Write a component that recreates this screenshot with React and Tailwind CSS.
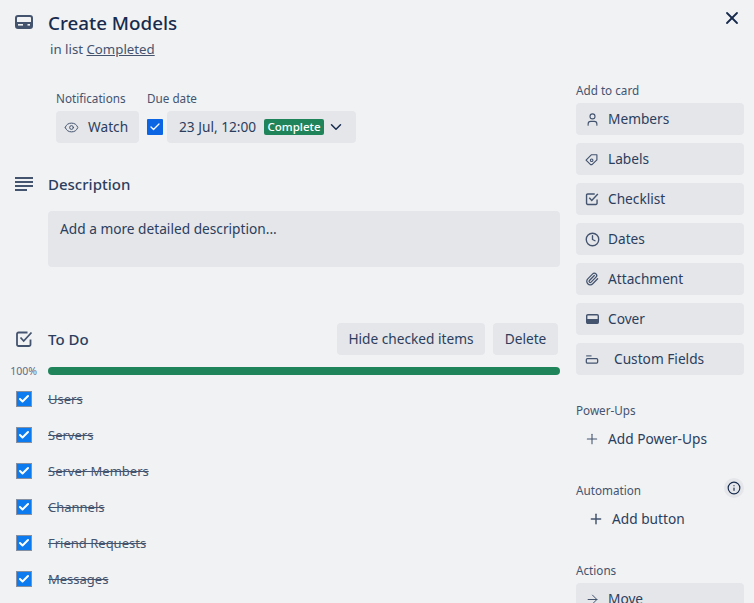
import React from "react";
import { Eye, ChevronDown, User, Clock, Paperclip, Plus, ArrowRight, Info, X, Check } from "lucide-react";

const CardIcon = ({ className }) => (
  <svg className={className} viewBox="0 0 18 14" fill="none">
    <rect x="1" y="1" width="16" height="12" rx="2" stroke="currentColor" strokeWidth="2" />
    <rect x="1" y="7" width="16" height="6" fill="currentColor" />
    <rect x="3" y="9" width="5" height="1.6" fill="#f1f2f4" />
    <rect x="12.5" y="9" width="2.5" height="1.6" fill="#f1f2f4" />
  </svg>
);

const CoverIcon = ({ className }) => (
  <svg className={className} viewBox="0 0 13 10" fill="none">
    <rect x="0.7" y="0.7" width="11.6" height="8.6" rx="1.2" stroke="currentColor" strokeWidth="1.4" />
    <rect x="0.7" y="5" width="11.6" height="4.3" fill="currentColor" />
  </svg>
);

const FieldsIcon = ({ className }) => (
  <svg className={className} viewBox="0 0 14 10" fill="none">
    <path d="M0.5 1h6" stroke="currentColor" strokeWidth="1.2" />
    <rect x="0.7" y="4" width="12.6" height="5" rx="1.2" stroke="currentColor" strokeWidth="1.4" />
  </svg>
);

const LabelIcon = ({ className }) => (
  <svg className={className} viewBox="0 0 16 16" fill="none">
    <path d="M1.2 9.2 7.2 3.2 H13.6 V9 L8 14.4 H6.4 Z" stroke="currentColor" strokeWidth="1.3" strokeLinejoin="round" />
    <circle cx="7.6" cy="9.4" r="1.5" stroke="currentColor" strokeWidth="1.2" />
  </svg>
);

const CheckBoxIcon = ({ className }) => (
  <svg className={className} viewBox="0 0 18 18" fill="none">
    <path d="M15.5 9.5V14.5a1.5 1.5 0 0 1-1.5 1.5H3.5A1.5 1.5 0 0 1 2 14.5V4a1.5 1.5 0 0 1 1.5-1.5H12.5" stroke="currentColor" strokeWidth="1.8" />
    <path d="M5.5 7.5 8.7 11 16.5 2.5" stroke="currentColor" strokeWidth="1.8" />
  </svg>
);

const DescIcon = ({ className }) => (
  <svg className={className} viewBox="0 0 18 14" fill="none">
    <path d="M0 1h18M0 5h18M0 9h18" stroke="currentColor" strokeWidth="2" />
    <path d="M0 13h12" stroke="currentColor" strokeWidth="2" />
  </svg>
);

const btnText = "text-[13.7px] font-normal text-[#2c3e5d]";

const SideButton = ({ icon, label, gap = "gap-2" }) => (
  <button className={`flex h-8 w-full shrink-0 items-center ${gap} rounded bg-[#e4e6ea] pl-2 text-left ${btnText}`}>
    <span className="flex w-4 shrink-0 items-center justify-center text-[#44546f]">{icon}</span>
    <span className="pt-px">{label}</span>
  </button>
);

const SideLabel = ({ children }) => (
  <div className="h-[13px] text-[11.7px] leading-[13px] text-[#44546f]">{children}</div>
);

const items = ["Users", "Servers", "Server Members", "Channels", "Friend Requests", "Messages"];

export default function App() {
  return (
    <div className="relative h-[603px] w-[754px] overflow-hidden bg-[#f1f2f4] font-['Noto_Sans',sans-serif] text-[#172b4d]">
      {/* close */}
      <button className="absolute right-[12px] top-[8px] text-[#172b4d]">
        <X className="h-5 w-5" strokeWidth={2.2} />
      </button>

      {/* header */}
      <div className="flex h-[36px] pl-[15px] pt-[9px]">
        <CardIcon className="mt-[6px] h-[14px] w-[18px] text-[#44546f]" />
        <h2 className="ml-[15px] text-[18.8px] font-medium leading-7 text-[#172b4d]">Create Models</h2>
      </div>
      <div className="mt-[3px] pl-[50px] text-[13.25px] leading-5 text-[#44546f]">
        in list <span className="underline">Completed</span>
      </div>

      <div className="mt-4 flex gap-4 pr-[10px]">
        {/* main column */}
        <div className="w-[560px] shrink-0">
          <div className="mt-[15px] flex gap-2 pl-14">
            <div>
              <div className="mb-1 h-[17px] text-[11.7px] leading-[17px] text-[#44546f]">Notifications</div>
              <button className={`flex h-8 w-[83px] items-center gap-[9px] rounded bg-[#e4e6ea] pl-2 ${btnText}`}>
                <Eye className="h-[15px] w-[15px] text-[#44546f]" strokeWidth={1.6} />
                <span className="pt-px">Watch</span>
              </button>
            </div>
            <div>
              <div className="mb-1 h-[17px] text-[11.7px] leading-[17px] text-[#44546f]">Due date</div>
              <div className="flex items-center gap-1">
                <span className="flex h-4 w-4 items-center justify-center rounded-[1px] bg-[#0c66e4]">
                  <Check className="h-3 w-3 text-white" strokeWidth={2.5} />
                </span>
                <button className={`flex h-8 w-[189px] items-center rounded bg-[#e4e6ea] pl-3 ${btnText}`}>
                  <span className="w-[85px] whitespace-nowrap pt-px text-left">23 Jul, 12:00</span>
                  <span className="w-[60px] rounded-[2px] bg-[#1f845a] text-center text-[11.5px] font-medium leading-4 text-white">Complete</span>
                  <ChevronDown className="ml-[3px] h-[18px] w-[18px] text-[#172b4d]" strokeWidth={2} />
                </button>
              </div>
            </div>
          </div>

          <div className="mt-[26px] flex h-[30px] items-center pl-[15px]">
            <DescIcon className="h-[14px] w-[18px] text-[#44546f]" />
            <h3 className="ml-[15px] text-[15px] font-medium text-[#2c3e5d]">Description</h3>
          </div>
          <div className={`ml-12 mt-[12px] h-14 rounded bg-[#e4e6ea] px-3 py-2 leading-5 ${btnText}`}>
            Add a more detailed description...
          </div>

          <div className="mt-14 flex h-8 items-center pl-[15px]">
            <CheckBoxIcon className="h-[18px] w-[18px] text-[#44546f]" />
            <h3 className="ml-[15px] text-[15px] font-medium text-[#2c3e5d]">To Do</h3>
            <button className={`ml-auto flex h-8 w-[148px] items-center justify-center rounded bg-[#e4e6ea] ${btnText}`}>Hide checked items</button>
            <button className={`ml-2 mr-[2px] flex h-8 w-[65px] items-center justify-center rounded bg-[#e4e6ea] ${btnText}`}>Delete</button>
          </div>

          <div className="mt-[12px] flex h-2 items-center">
            <span className="w-12 pr-[11px] pt-[2px] text-right text-[10.5px] text-[#5e6c84]">100%</span>
            <div className="h-2 flex-1 rounded-full bg-[#1f845a]" />
          </div>

          <div className="mt-[12px]">
            {items.map((item) => (
              <div key={item} className="flex h-9 items-start pl-4">
                <span className="mt-[4px] flex h-4 w-4 items-center justify-center border border-[#8590a2] bg-[#0c7bf0]">
                  <Check className="h-3 w-3 text-white" strokeWidth={4} />
                </span>
                <span className="ml-4 text-[13px] leading-6 text-[#44546f] line-through">{item}</span>
              </div>
            ))}
          </div>
        </div>

        {/* sidebar */}
        <div className="w-[168px] shrink-0">
          <div className="mt-[9px]">
            <SideLabel>Add to card</SideLabel>
          </div>
          <div className="mt-[6px] flex flex-col gap-2">
            <SideButton icon={<User className="h-[15px] w-[15px]" strokeWidth={1.8} />} label="Members" />
            <SideButton icon={<LabelIcon className="h-[14px] w-[14px]" />} label="Labels" />
            <SideButton icon={<CheckBoxIcon className="h-[14px] w-[14px]" />} label="Checklist" />
            <SideButton icon={<Clock className="h-[15px] w-[15px]" strokeWidth={2.2} />} label="Dates" />
            <SideButton icon={<Paperclip className="h-[14px] w-[14px]" strokeWidth={2.2} />} label="Attachment" />
            <SideButton icon={<CoverIcon className="h-[10px] w-[13px]" />} label="Cover" />
            <SideButton icon={<FieldsIcon className="h-[9px] w-[14px] max-w-none" />} label="Custom Fields" gap="gap-[14px]" />
          </div>

          <div className="mt-[29px]">
            <SideLabel>Power-Ups</SideLabel>
          </div>
          <button className={`mt-[6px] flex h-8 w-full items-center gap-2 pl-2 ${btnText}`}>
            <Plus className="h-4 w-4 text-[#44546f]" strokeWidth={1.6} />
            <span className="pt-px">Add Power-Ups</span>
          </button>

          <div className="relative mt-[29px]">
            <SideLabel>Automation</SideLabel>
            <span className="absolute right-0 top-[-6px] flex h-5 w-5 items-center justify-center rounded-full bg-[#e4e6ea]">
              <Info className="h-[14px] w-[14px] text-[#172b4d]" strokeWidth={2} />
            </span>
          </div>
          <button className={`mt-[6px] flex h-8 w-full items-center gap-2 pl-3 ${btnText}`}>
            <Plus className="h-4 w-4 text-[#44546f]" strokeWidth={2.2} />
            <span className="pt-px">Add button</span>
          </button>

          <div className="mt-[29px]">
            <SideLabel>Actions</SideLabel>
          </div>
          <div className="mt-[6px]">
            <SideButton icon={<ArrowRight className="h-[15px] w-[15px]" strokeWidth={1.6} />} label="Move" />
          </div>
        </div>
      </div>
    </div>
  );
}
